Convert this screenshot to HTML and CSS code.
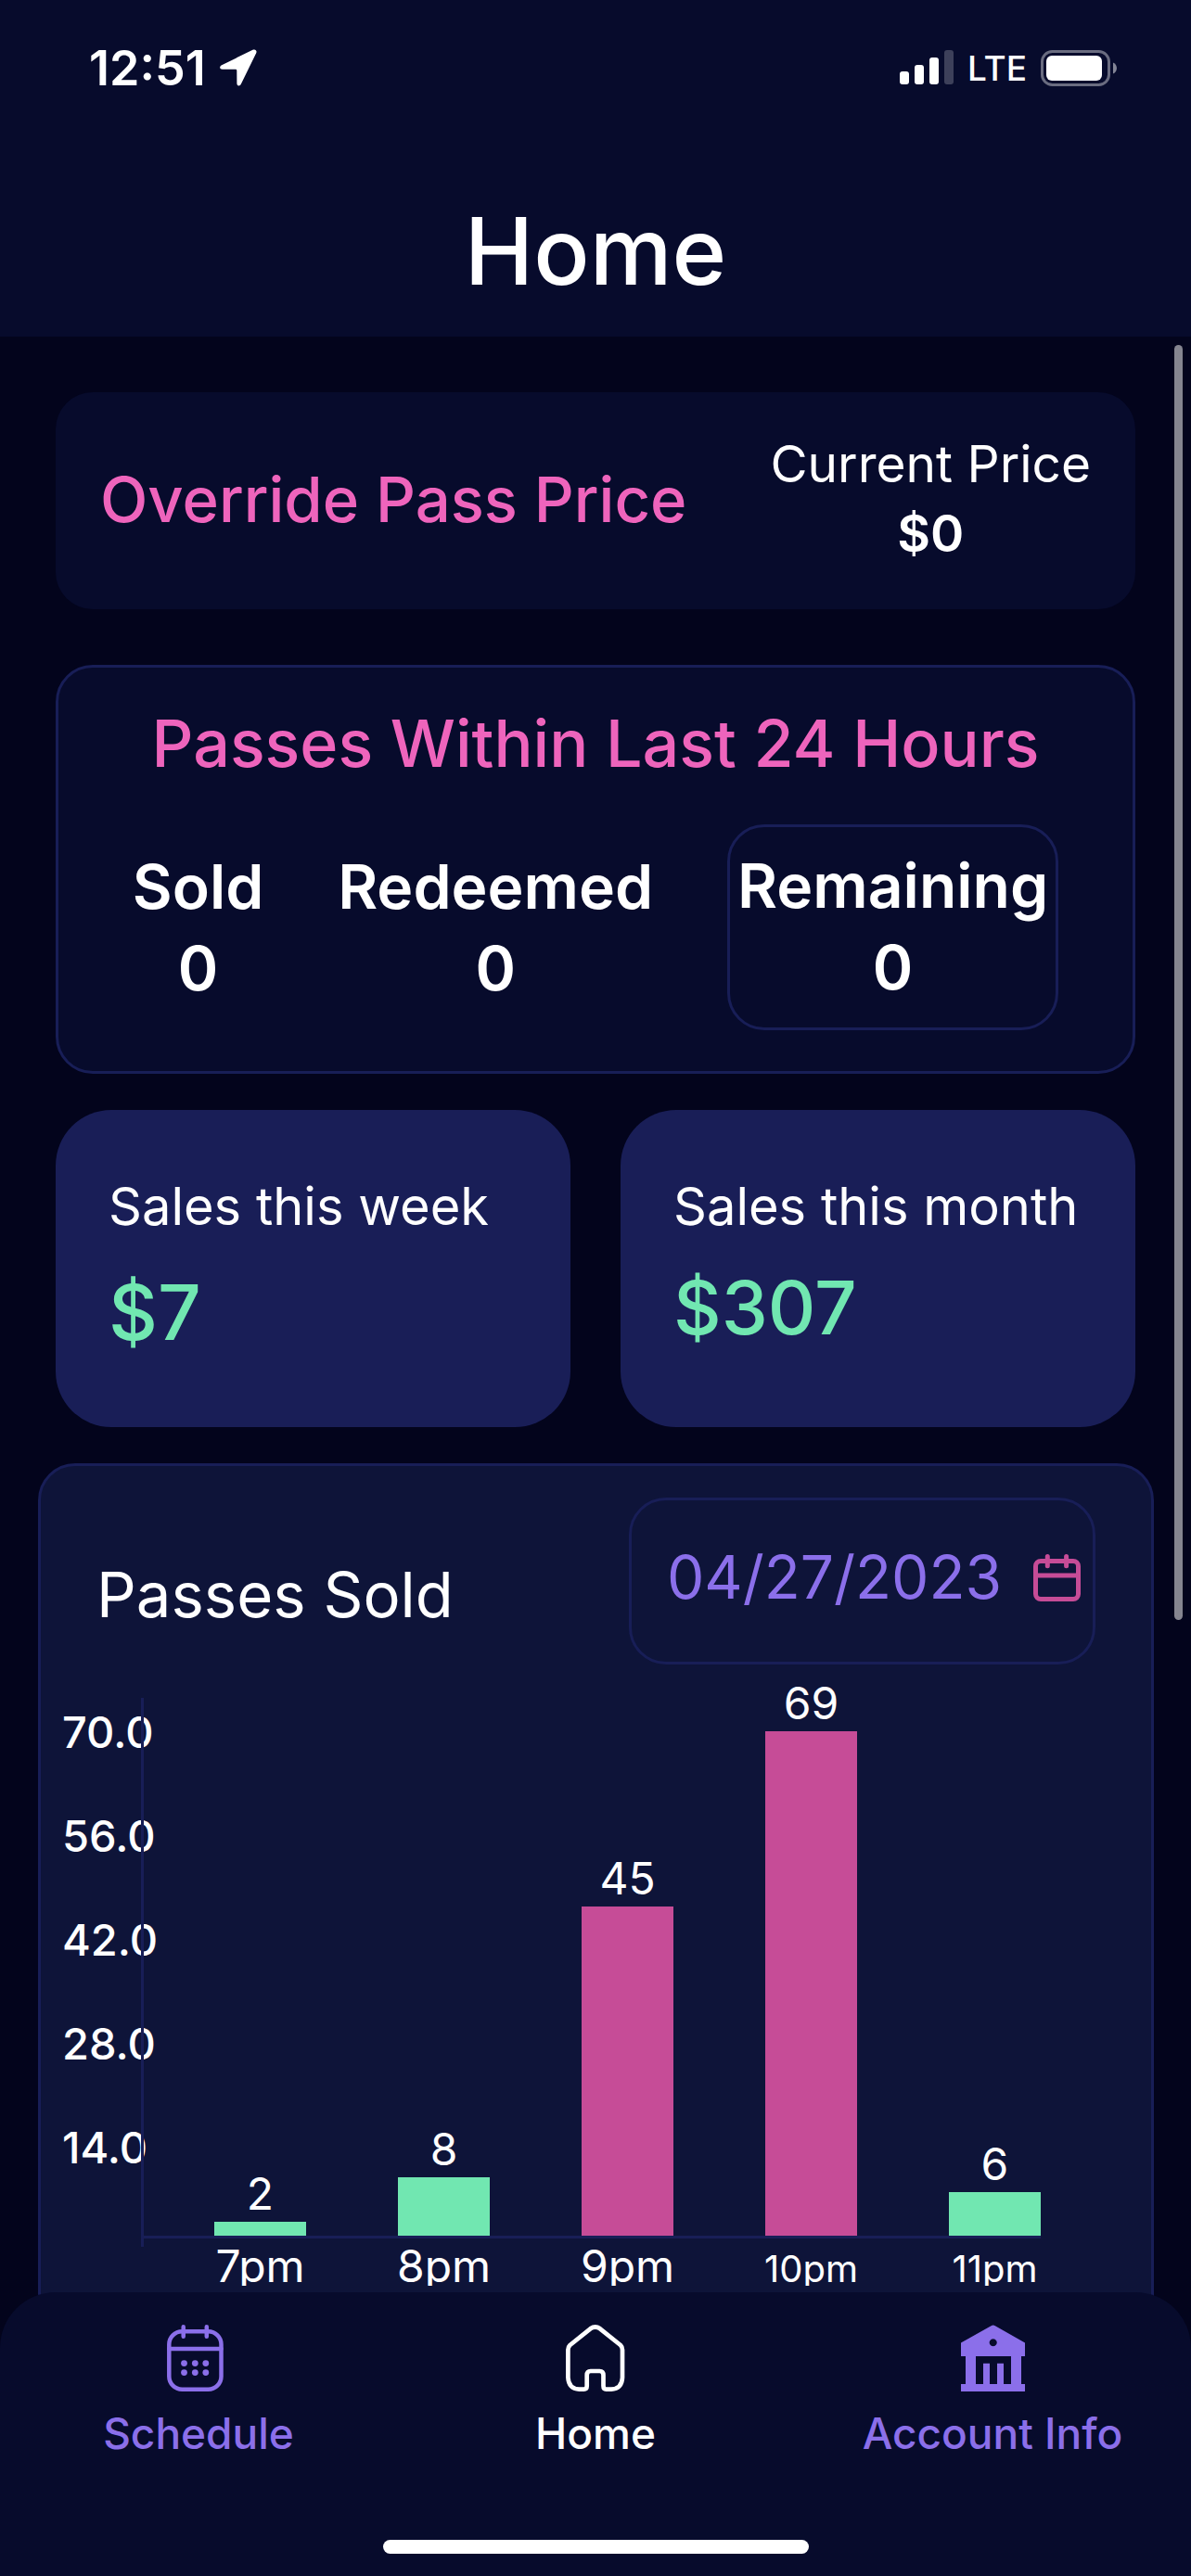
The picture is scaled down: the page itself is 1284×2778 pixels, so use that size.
FILE: index.html
```
<!DOCTYPE html>
<html lang="en">
<head>
    <meta charset="UTF-8">
    <meta name="viewport" content="width=device-width, initial-scale=1.0">
    <title>Home</title>
    <link rel="stylesheet" href="styles.css">
</head>
<body>
    <header class="header">
        <div class="status-bar">
            <div class="status-left">
                <span class="time">12:51</span>
                <svg width="40" height="40" viewBox="0 0 40 40" fill="#fff">
                    <path d="M35.5 .8 2 17.2C-.8 18.7-.3 21.6 2.8 21.7L17 21.8Q18.3 21.8 18.3 23.1L18.4 37C18.5 40 21.5 40.4 22.8 37.8L39.2 4.3C40.4 1.7 38.2-.5 35.5 .8Z"/>
                </svg>
            </div>
            <div class="status-right">
                <svg width="58" height="38" viewBox="0 0 58 38" fill="#fff">
                    <rect x="0" y="23" width="10" height="14" rx="3"/>
                    <rect x="16" y="16" width="10" height="21" rx="3"/>
                    <rect x="32" y="8" width="10" height="29" rx="3"/>
                    <rect x="48" y="0" width="10" height="37" rx="3" opacity=".22"/>
                </svg>
                <span class="network">LTE</span>
                <svg width="82" height="39" viewBox="0 0 82 39" fill="#fff">
                    <rect x="1.5" y="1.5" width="72" height="36" rx="11" fill="none" stroke="#fff" stroke-width="3" opacity=".4"/>
                    <rect x="6" y="6" width="60" height="27" rx="6"/>
                    <path d="M78 13.500c5.300 2.300 5.300 9.700 0 12z" opacity=".5"/>
                </svg>
            </div>
        </div>
        <h1>Home</h1>
    </header>

    <main class="content">
        <button class="card override" type="button">
            <span class="override-title">Override Pass Price</span>
            <span class="current-price">Current Price<strong>$0</strong></span>
        </button>

        <section class="card passes">
            <h2>Passes Within Last 24 Hours</h2>
            <div class="stats">
                <div class="stat">Sold<span>0</span></div>
                <div class="stat">Redeemed<span>0</span></div>
                <div class="stat stat-outlined">Remaining<span>0</span></div>
            </div>
        </section>

        <section class="sales">
            <div class="sales-card">
                <p>Sales this week</p>
                <p class="amount">$7</p>
            </div>
            <div class="sales-card">
                <p>Sales this month</p>
                <p class="amount amount-long">$307</p>
            </div>
        </section>

        <section class="chart-card">
            <div class="chart-header">
                <h2>Passes Sold</h2>
                <button class="date-picker" type="button">
                    04/27/2023
                    <svg width="51" height="51" viewBox="0 0 51 51" fill="none" stroke="#c64c97" stroke-width="5" stroke-linecap="round">
                        <rect x="2.500" y="7.500" width="46" height="41" rx="5.500"/>
                        <path d="M2.500 23H48.500M15.300 2.500V12.700M35.600 2.500V12.700"/>
                    </svg>
                </button>
            </div>
            <div class="chart">
                <div class="y-axis">
                    <span>70.0</span>
                    <span>56.0</span>
                    <span>42.0</span>
                    <span>28.0</span>
                    <span>14.0</span>
                </div>
                <div class="y-line"></div>
                <div class="plot">
                    <div class="bars">
                        <div class="bar-group">2<div class="bar" style="height: 15px"></div></div>
                        <div class="bar-group">8<div class="bar" style="height: 63px"></div></div>
                        <div class="bar-group">45<div class="bar bar-busy" style="height: 355px"></div></div>
                        <div class="bar-group">69<div class="bar bar-busy" style="height: 544px"></div></div>
                        <div class="bar-group">6<div class="bar" style="height: 47px"></div></div>
                    </div>
                    <div class="x-axis">
                        <span>7pm</span>
                        <span>8pm</span>
                        <span>9pm</span>
                        <span class="long">10pm</span>
                        <span class="long">11pm</span>
                    </div>
                </div>
            </div>
        </section>
        <div class="scrollbar"></div>
    </main>

    <footer class="bottom-bar">
        <nav class="tabs">
            <a class="tab" href="#schedule">
                <svg width="68" height="72" viewBox="0 0 68 72" fill="none" stroke="currentColor" stroke-width="4.500" stroke-linecap="round">
                    <rect x="2.300" y="7.300" width="56.200" height="62.400" rx="14"/>
                    <path d="M2.300 26H58.500M17.700 2.300V12.700M42.800 2.300V12.700"/>
                    <g fill="currentColor" stroke="none">
                        <circle cx="18.500" cy="41.600" r="3.400"/>
                        <circle cx="30.300" cy="41.600" r="3.400"/>
                        <circle cx="41.800" cy="41.600" r="3.400"/>
                        <circle cx="18.500" cy="51.600" r="3.400"/>
                        <circle cx="30.300" cy="51.600" r="3.400"/>
                        <circle cx="41.800" cy="51.600" r="3.400"/>
                    </g>
                </svg>
                Schedule
            </a>
            <a class="tab active" href="#home">
                <svg width="64" height="72" viewBox="0 0 64 72" fill="none" stroke="currentColor" stroke-width="4.700" stroke-linejoin="round">
                    <path d="M4.500 22 26.500 4.300Q31.700 .7 36.900 4.300L58.900 22Q61 24 61 27V57Q60.500 69 49 69.600H43.500Q40.500 69.600 40.500 66V54.500Q40.500 50 36.500 50H26.700Q22.700 50 22.700 54.500V66Q22.700 69.600 19.500 69.600H14.500Q3 69 2.400 57V27Q2.400 24 4.500 22Z"/>
                </svg>
                Home
            </a>
            <a class="tab" href="#account">
                <svg width="69" height="72" viewBox="0 0 69 72" fill="currentColor">
                    <path fill-rule="evenodd" d="M0 19.500 32.500 1.200Q34.700 0 36.900 1.200L69 19.500V34H65V64H69V72H0V64H5V34H0ZM16 34V64H24V41.700H31V64H39V41.700H46V64H54V34ZM34.700 15.200a4 4 0 1 0 .01 0Z"/>
                </svg>
                Account Info
            </a>
        </nav>
        <div class="home-indicator"></div>
    </footer>
</body>
</html>
```
FILE: styles.css
```
* {
    margin: 0;
    padding: 0;
    box-sizing: border-box;
}

body {
    display: flex;
    flex-direction: column;
    height: 100vh;
    overflow: hidden;
    position: relative;
    background-color: #03041c;
    color: #fff;
    font-family: 'Inter', sans-serif;
}

button {
    font-family: inherit;
    color: inherit;
    cursor: pointer;
}

.header {
    background-color: #070b2c;
    padding: 43px 80px 16px;
}

.status-bar {
    display: flex;
    justify-content: space-between;
    align-items: center;
    height: 60px;
    padding-left: 16px;
}

.status-left,
.status-right {
    display: flex;
    align-items: center;
    gap: 15px;
}

.time {
    font-size: 52px;
    font-weight: 600;
}

.network {
    font-size: 37px;
    font-weight: 500;
}

.header h1 {
    margin-top: 92px;
    font-size: 100px;
    font-weight: 500;
    line-height: 152px;
    text-align: center;
}

.content {
    flex: 1;
    min-height: 0;
    overflow: hidden;
    position: relative;
    padding: 60px 60px 0;
}

.card {
    background-color: #070b2c;
    border-radius: 40px;
}

.override {
    display: flex;
    justify-content: space-between;
    align-items: center;
    width: 100%;
    border: none;
    padding: 40px 48px 44px;
    margin-bottom: 60px;
}

.override-title {
    color: #ee64bc;
    font-size: 67px;
    font-weight: 500;
}

.current-price {
    font-size: 55px;
    line-height: 75px;
    text-align: center;
}

.current-price strong {
    display: block;
    font-weight: 600;
}

.passes {
    border: 3px solid #181e57;
    padding: 42px 0 44px;
    margin-bottom: 39px;
}

.passes h2 {
    color: #ee64bc;
    font-size: 70px;
    font-weight: 500;
    line-height: 80px;
    text-align: center;
    margin-bottom: 47px;
}

.stats {
    display: flex;
    justify-content: space-evenly;
    align-items: center;
}

.stat {
    font-size: 66px;
    font-weight: 600;
    line-height: 88px;
    text-align: center;
}

.stat span {
    display: block;
}

.stat-outlined {
    border: 3px solid #181e57;
    border-radius: 40px;
    padding: 19px 8px 21px;
}

.sales {
    display: grid;
    grid-template-columns: 1fr 1fr;
    gap: 54px;
    margin-bottom: 39px;
}

.sales-card {
    background-color: #191e57;
    border-radius: 60px;
    padding: 66px 0 73px 57px;
    font-size: 56px;
    line-height: 76px;
    white-space: nowrap;
}

.amount {
    margin-top: 27px;
    color: #71e7b1;
    font-size: 82px;
    font-weight: 500;
    line-height: 100px;
}

.amount-long {
    font-size: 80px;
    line-height: 88px;
}

.chart-card {
    background-color: #0e1439;
    border: 3px solid #181e57;
    border-radius: 40px;
    margin: 0 -20px 0 -19px;
    padding: 34px 0 120px;
}

.chart-header {
    display: flex;
    justify-content: space-between;
    align-items: center;
    padding: 0 60px;
}

.chart-header h2 {
    padding-top: 28px;
    font-size: 67px;
    font-weight: 400;
}

.date-picker {
    display: flex;
    align-items: center;
    gap: 34px;
    background: none;
    border: 3px solid #181e57;
    border-radius: 40px;
    padding: 44px 13px 52px 38px;
    color: #8b6fea;
    font-size: 64px;
    line-height: 78px;
}

/* y labels | axis line | bars */
.chart {
    display: grid;
    grid-template-columns: 85px 3px 1fr;
    margin-top: 17px;
    padding: 0 119px 0 23px;
    font-size: 48px;
}

.y-axis {
    display: flex;
    flex-direction: column;
    font-size: 47px;
    font-weight: 500;
    line-height: 112px;
}

.y-line {
    position: relative;
    height: 592px;
    margin-top: 19px;
    background-color: #181e57;
}

.plot {
    padding-top: 19px;
    text-align: center;
    line-height: 60px;
}

.bars,
.x-axis {
    display: grid;
    grid-template-columns: repeat(5, 1fr);
    column-gap: 99px;
    padding-left: 76px;
}

/* the tallest bar's number may rise above the plot */
.bars {
    grid-template-rows: 580px;
    align-items: end;
    border-bottom: 3px solid #181e57;
}

.bar {
    background-color: #71e7b1;
}

.bar-busy {
    background-color: #c64c97;
}

.x-axis {
    align-items: baseline;
    height: 51px;
    overflow: hidden;
}

.x-axis span {
    display: flex;
    justify-content: center;
    min-width: 0;
}

.x-axis .long {
    font-size: 40px;
}

.scrollbar {
    position: absolute;
    top: 9px;
    right: 9px;
    width: 9px;
    height: 1375px;
    border-radius: 5px;
    background-color: #85858f;
}

.bottom-bar {
    position: absolute;
    left: 0;
    right: 0;
    bottom: 0;
    background-color: #070b2c;
    border-radius: 60px 60px 0 0;
    padding: 35px 0 24px;
}

.tabs {
    display: grid;
    grid-template-columns: repeat(3, 1fr);
}

.tab {
    display: flex;
    flex-direction: column;
    align-items: center;
    gap: 15px;
    color: #8b6fea;
    font-size: 46px;
    font-weight: 500;
    line-height: 60px;
    text-decoration: none;
}

.tab.active {
    color: #fff;
}

.home-indicator {
    width: 459px;
    height: 15px;
    margin: 85px auto 0;
    border-radius: 8px;
    background-color: #fff;
}
```
